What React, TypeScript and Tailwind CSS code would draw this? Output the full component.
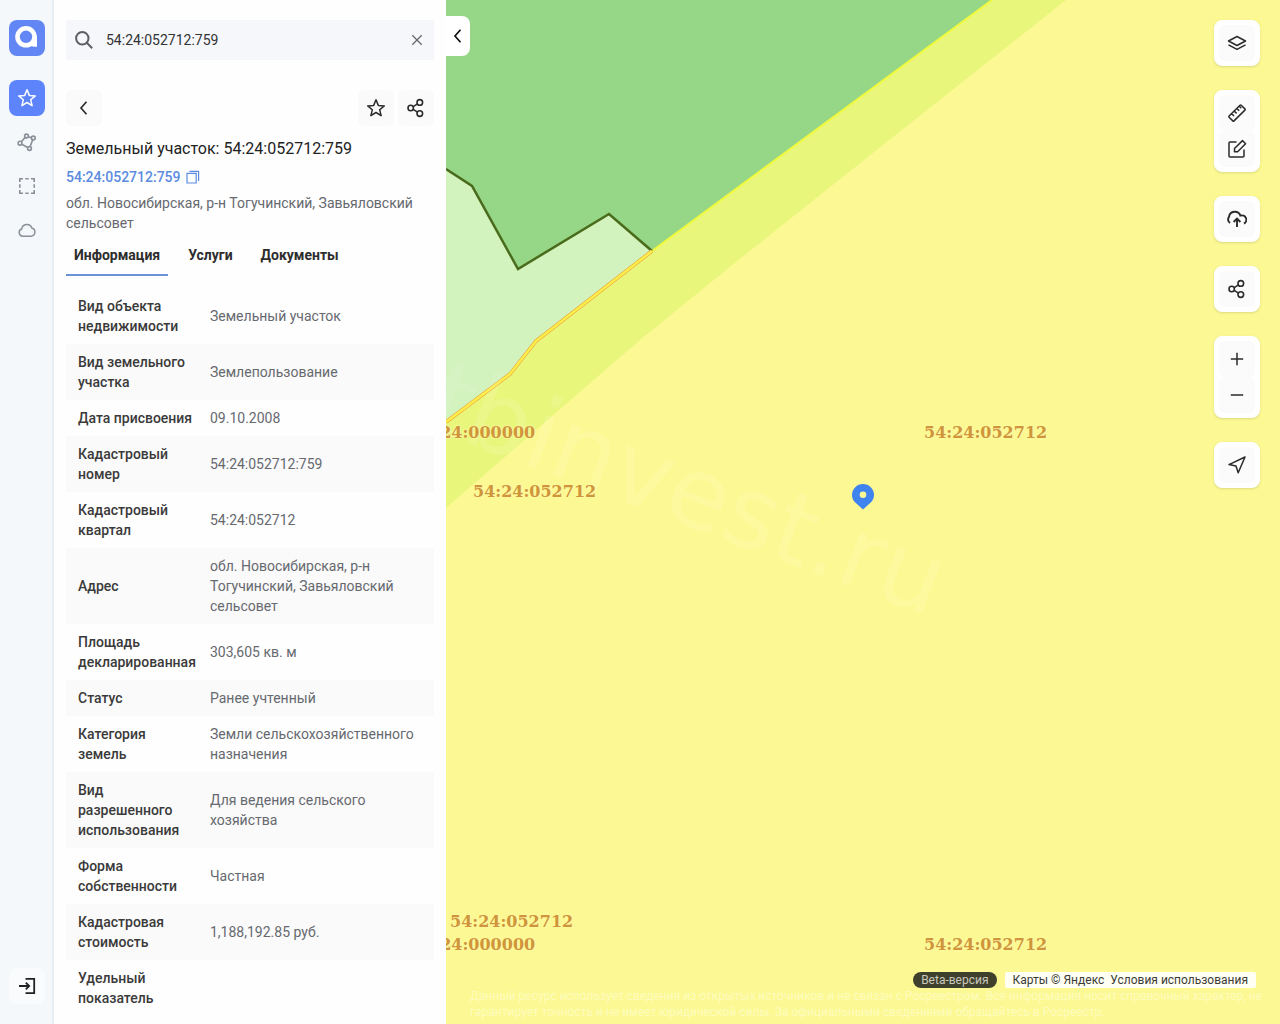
import { useState } from 'react'
import type { ReactNode } from 'react'

const ROWS: { label: string; value: string }[] = [
  { label: 'Вид объекта недвижимости', value: 'Земельный участок' },
  { label: 'Вид земельного участка', value: 'Землепользование' },
  { label: 'Дата присвоения', value: '09.10.2008' },
  { label: 'Кадастровый номер', value: '54:24:052712:759' },
  { label: 'Кадастровый квартал', value: '54:24:052712' },
  { label: 'Адрес', value: 'обл. Новосибирская, р-н Тогучинский, Завьяловский сельсовет' },
  { label: 'Площадь декларированная', value: '303,605 кв. м' },
  { label: 'Статус', value: 'Ранее учтенный' },
  { label: 'Категория земель', value: 'Земли сельскохозяйственного назначения' },
  { label: 'Вид разрешенного использования', value: 'Для ведения сельского хозяйства' },
  { label: 'Форма собственности', value: 'Частная' },
  { label: 'Кадастровая стоимость', value: '1,188,192.85 руб.' },
  { label: 'Удельный показатель', value: '' },
]

const TABS = ['Информация', 'Услуги', 'Документы']

interface IconProps {
  children: ReactNode
  className?: string
  width?: number
}

function Icon({ children, className = 'size-5', width = 1.5 }: IconProps) {
  return (
    <svg viewBox="0 0 20 20" fill="none" stroke="currentColor" strokeWidth={width} className={className} aria-hidden="true">
      {children}
    </svg>
  )
}

const StarIcon = () => (
  <Icon>
    <path strokeLinejoin="round" d="M10 1.8l2.3 5.6 6 .5-4.6 3.9 1.4 5.9-5.1-3.2-5.1 3.2 1.4-5.9L1.700 7.900l6-.5z" />
  </Icon>
)

const ShareIcon = () => (
  <Icon width={1.6}>
    <circle cx="4.700" cy="10" r="2.700" />
    <circle cx="13.800" cy="4.400" r="2.800" />
    <circle cx="13.800" cy="15.600" r="2.800" />
    <path d="M7.200 8.600l4.300-2.700M7.200 11.400l4.300 2.700" />
  </Icon>
)

const ChevronIcon = () => (
  <Icon width={1.7}>
    <path d="M12.500 3.800L7 10l5.500 6.200" />
  </Icon>
)

const GraphIcon = () => (
  <Icon width={1.6}>
    <circle cx="3" cy="11.200" r="1.900" />
    <circle cx="9.500" cy="4" r="1.900" />
    <circle cx="16.300" cy="6" r="1.900" />
    <circle cx="12.500" cy="16.500" r="1.900" />
    <path d="M4.300 9.800l3.900-4.400M11.300 4.700l3.200 1M15.700 7.800l-2.600 6.800M4.700 12.200l6.100 3.300" />
  </Icon>
)

const SelectIcon = () => (
  <Icon width={1.6}>
    <path d="M2.800 6V2.800H6M14 2.800h3.200V6M17.200 14v3.200H14M6 17.200H2.800V14M8.300 2.800h3.400M8.300 17.200h3.400M2.800 8.300v3.400M17.200 8.300v3.400" />
  </Icon>
)

const CloudIcon = () => (
  <Icon>
    <path d="M6 16.200a3.700 3.700 0 0 1-1.300-7.200A5.200 5.200 0 0 1 14.800 8a4.200 4.200 0 0 1-.5 8.200z" />
  </Icon>
)

const LoginIcon = () => (
  <Icon width={1.8}>
    <path d="M8.500 2.800h8.700v14.400H8.500M2 10h10M8.800 6.600l3.400 3.400-3.400 3.400" />
  </Icon>
)

function MapButton({ label, children }: { label: string; children: ReactNode }) {
  return (
    <button type="button" aria-label={label} className="flex size-9 items-center justify-center rounded-md bg-[#fbfbfc] text-[#2b2b2b]">
      {children}
    </button>
  )
}

function MapGroup({ children }: { children: ReactNode }) {
  return <div className="rounded-lg border border-white bg-white p-1 shadow-sm">{children}</div>
}

function RailButton({ label, children }: { label: string; children: ReactNode }) {
  return (
    <button type="button" aria-label={label} className="flex size-9 items-center justify-center rounded-lg text-[#8b9098]">
      {children}
    </button>
  )
}

function Rail() {
  return (
    <nav className="flex w-[54px] shrink-0 flex-col items-center border-r-2 border-[#e6eef4] bg-[#f4f8fb] py-5 pl-px">
      <a href="#" aria-label="Главная" className="mb-6 flex size-9 items-center justify-center rounded-lg bg-[#6287f5]">
        <svg viewBox="0 0 36 36" className="size-9" aria-hidden="true">
          <path d="M24 16h4v10.800c-3.500.2-6-.6-8-1.800z" fill="#fff" />
          <circle cx="17" cy="16.800" r="8.500" fill="#6287f5" stroke="#fff" strokeWidth="4.600" />
        </svg>
      </a>
      <div className="flex flex-col gap-2">
        <button type="button" aria-label="Избранное" className="flex size-9 items-center justify-center rounded-lg bg-[#5d84fa] text-white">
          <StarIcon />
        </button>
        <RailButton label="Граф"><GraphIcon /></RailButton>
        <RailButton label="Выделение"><SelectIcon /></RailButton>
        <RailButton label="Облако"><CloudIcon /></RailButton>
      </div>
      <button type="button" aria-label="Войти" className="mt-auto flex size-9 items-center justify-center rounded-lg bg-[#fafbfc] text-[#222]">
        <LoginIcon />
      </button>
    </nav>
  )
}

function SearchBox() {
  const [query, setQuery] = useState('54:24:052712:759')
  return (
    <div className="flex h-10 shrink-0 items-center bg-[#f6f7fb] px-2">
      <Icon width={2} className="size-5 shrink-0 text-[#5c5f66]">
        <circle cx="8.300" cy="8.300" r="6.200" />
        <path d="M12.800 12.800l5.400 5.400" />
      </Icon>
      <input
        type="text"
        aria-label="Поиск"
        value={query}
        onChange={(e) => setQuery(e.target.value)}
        className="ml-3 min-w-0 flex-1 bg-transparent text-sm text-[#333] outline-none"
      />
      <button type="button" aria-label="Очистить" onClick={() => setQuery('')} className="text-[#666]">
        <Icon width={1.4} className="size-[18px]">
          <path d="M4.800 4.800l10.400 10.400M15.200 4.800L4.800 15.200" />
        </Icon>
      </button>
    </div>
  )
}

function Panel() {
  const [tab, setTab] = useState(TABS[0])
  const square = 'flex size-9 items-center justify-center rounded-md bg-[#fafafa] text-[#2b2b2b]'
  return (
    <aside className="flex w-[392px] shrink-0 flex-col bg-[#fefefe] px-3 pt-5 pb-3">
      <SearchBox />
      <div className="mt-[30px] min-h-0 flex-1 overflow-y-auto [scrollbar-width:none]">
        <div className="flex gap-1">
          <button type="button" aria-label="Назад" className={square}><ChevronIcon /></button>
          <span className="flex-1" />
          <button type="button" aria-label="В избранное" className={square}><StarIcon /></button>
          <button type="button" aria-label="Поделиться" className={square}><ShareIcon /></button>
        </div>
        <h1 className="mt-[13px] text-base leading-5 text-[#222]">Земельный участок: 54:24:052712:759</h1>
        <div className="mt-2 flex h-5 items-center gap-1 text-sm font-medium text-[#5b8be0]">
          <a href="#">54:24:052712:759</a>
          <button type="button" aria-label="Скопировать">
            <Icon className="size-4">
              <path d="M2.500 5.500h11.500v12H2.500zM5.500 3h11.500v12" />
            </Icon>
          </button>
        </div>
        <p className="mt-1.5 text-sm leading-5 text-[#66696f]">
          обл. Новосибирская, р-н Тогучинский, Завьяловский сельсовет
        </p>
        <div role="tablist" className="mt-0.5 flex gap-3">
          {TABS.map((name) => (
            <button
              key={name}
              type="button"
              role="tab"
              aria-selected={tab === name}
              onClick={() => setTab(name)}
              className={`h-[41px] border-b-2 px-2 text-sm font-bold text-[#2d2d2d] ${tab === name ? 'border-[#6b93dc]' : 'border-transparent'}`}
            >
              {name}
            </button>
          ))}
        </div>
        <table className="mt-3 w-full table-fixed text-left text-sm leading-5">
          <colgroup>
            <col className="w-[132px]" />
            <col />
          </colgroup>
          <tbody>
            {ROWS.map((row) => (
              <tr key={row.label} className="even:bg-[#fafafa]">
                <th className="py-2 pr-1 pl-3 font-medium text-[#3a3a3a]">{row.label}</th>
                <td className="px-3 py-2 text-[#66696f]">{row.value}</td>
              </tr>
            ))}
          </tbody>
        </table>
      </div>
    </aside>
  )
}

function MapCanvas() {
  return (
    <svg className="absolute inset-0 h-full w-full" aria-hidden="true">
      {/* field strip along the border of the forest */}
      <path d="M546 0h74L432 149L290 262L194 340L0 508V0z" fill="#e9f67c" />
      <path d="M0 169L26 186L72 269L163 214L206 251L90 341L64 374L0 422z" fill="#d2f3bd" />
      <path d="M0 0h546L206 251L163 214L72 269L26 186L0 169z" fill="#96d687" />
      <path d="M546 0L206 251" stroke="#f0fa3c" strokeWidth="2" />
      <path d="M0 169L26 186L72 269L163 214L206 251" fill="none" stroke="#4a6b1c" strokeWidth="2.500" />
      <path d="M206 251L90 341L64 374L0 422" fill="none" stroke="#eda33a" strokeWidth="3.600" />
      <path d="M206 251L90 341L64 374L0 422" fill="none" stroke="#fdf04a" strokeWidth="2.400" />
      <text
        x="484"
        y="617"
        textAnchor="end"
        transform="rotate(20.600 484 617)"
        fill="#fff"
        fillOpacity="0.1"
        fontSize="100"
        fontFamily="'DejaVu Sans', sans-serif"
      >
        tbinvest.ru
      </text>
    </svg>
  )
}

function MapView() {
  const mark =
    'absolute font-["DejaVu_Serif",serif] text-base leading-5 font-bold whitespace-nowrap text-[#d0953a] [text-shadow:0_0_2px_#fdfaa8,0_0_2px_#fdfaa8]'
  return (
    <main className="relative min-w-0 flex-1 overflow-hidden bg-[#fcf994]">
      <MapCanvas />
      <span className={`${mark} top-[423px] -left-[34px]`}>54:24:000000</span>
      <span className={`${mark} top-[423px] left-[478px]`}>54:24:052712</span>
      <span className={`${mark} top-[482px] left-[27px]`}>54:24:052712</span>
      <span className={`${mark} top-[912px] left-1`}>54:24:052712</span>
      <span className={`${mark} top-[935px] -left-[34px]`}>54:24:000000</span>
      <span className={`${mark} top-[935px] left-[478px]`}>54:24:052712</span>

      <svg viewBox="0 0 22 26" className="absolute top-[484px] left-1/2 h-[26px] w-[22px] -translate-x-1/2" aria-hidden="true">
        <path
          d="M11 0a11 11 0 0 1 11 11c0 3-1.300 5.500-3.300 7.500L11 25.500l-7.700-7C1.300 16.500 0 14 0 11A11 11 0 0 1 11 0zM11 7.500a3.300 3.300 0 1 0 0 6.600a3.300 3.300 0 1 0 0-6.600z"
          fill="#3f83ee"
          fillRule="evenodd"
        />
      </svg>

      <button type="button" aria-label="Свернуть панель" className="absolute top-4 left-0 flex h-10 w-6 items-center justify-center rounded-r-lg bg-white text-[#111]">
        <ChevronIcon />
      </button>

      <div className="absolute top-5 right-5 flex flex-col gap-6">
        <MapGroup>
          <MapButton label="Слои">
            <Icon>
              <path strokeLinejoin="round" d="M10 3.500l8.500 4.500L10 12.500L1.500 8zM1.500 11.800L10 16.300l8.500-4.500" />
            </Icon>
          </MapButton>
        </MapGroup>
        <MapGroup>
          <MapButton label="Линейка">
            <Icon>
              <path
                strokeLinejoin="round"
                d="M2.100 13L13 2.200Q13.600 1.600 14.200 2.200L17.900 5.900Q18.500 6.500 17.900 7.100L7 17.900Q6.400 18.500 5.800 17.900L2.100 14.200Q1.500 13.600 2.100 13zM4.800 10.800l2.200 2.200M7.400 8.200l2.200 2.200M10 5.600l2.200 2.200M12.300 3.300l2 2"
              />
            </Icon>
          </MapButton>
          <MapButton label="Редактировать">
            <Icon>
              <path strokeLinejoin="round" d="M9.500 3H3Q2 3 2 4v13q0 1 1 1h13q1 0 1-1v-6.500M7.500 12.700V9.500L15.500 1.600L18.600 4.700L10.600 12.700z" />
            </Icon>
          </MapButton>
        </MapGroup>
        <MapGroup>
          <MapButton label="Загрузить">
            <Icon width={1.9}>
              <path d="M3 14A4.300 4.300 0 0 1 2 7.800A5.900 5.900 0 0 1 13.400 6.600A4.400 4.400 0 0 1 17 14.600M10 18V10.500M6.600 13L10 9.600l3.400 3.400" />
            </Icon>
          </MapButton>
        </MapGroup>
        <MapGroup>
          <MapButton label="Поделиться картой"><ShareIcon /></MapButton>
        </MapGroup>
        <MapGroup>
          <MapButton label="Приблизить">
            <Icon><path d="M10 3.800v12.400M3.800 10h12.400" /></Icon>
          </MapButton>
          <MapButton label="Отдалить">
            <Icon><path d="M3.800 10h12.400" /></Icon>
          </MapButton>
        </MapGroup>
        <MapGroup>
          <MapButton label="Моё местоположение">
            <Icon>
              <path strokeLinejoin="round" d="M18 2L2 9.600l7 1.400l2.200 6.800z" />
            </Icon>
          </MapButton>
        </MapGroup>
      </div>

      <footer className="absolute right-3 bottom-1 left-6 text-xs leading-4">
        <div className="flex justify-end gap-2 pr-3">
          <span className="rounded-full bg-[#3f402c] px-2 text-[#c9c9be]">Beta-версия</span>
          <span className="flex gap-1.5 rounded-xs bg-[#fffff4] px-2 text-[#3c3c36]">
            <span>Карты © Яндекс</span>
            <a href="#">Условия использования</a>
          </span>
        </div>
        <p className="text-[#fdfcbc]">
          Данный ресурс использует сведения из открытых источников и не связан с Росреестром. Вся информация носит
          справочный характер, не гарантирует точность и не имеет юридической силы. За официальными сведениями
          обращайтесь в Росреестр.
        </p>
      </footer>
    </main>
  )
}

export default function App() {
  return (
    <div className="flex h-screen overflow-hidden font-[Roboto,sans-serif]">
      <Rail />
      <Panel />
      <MapView />
    </div>
  )
}
